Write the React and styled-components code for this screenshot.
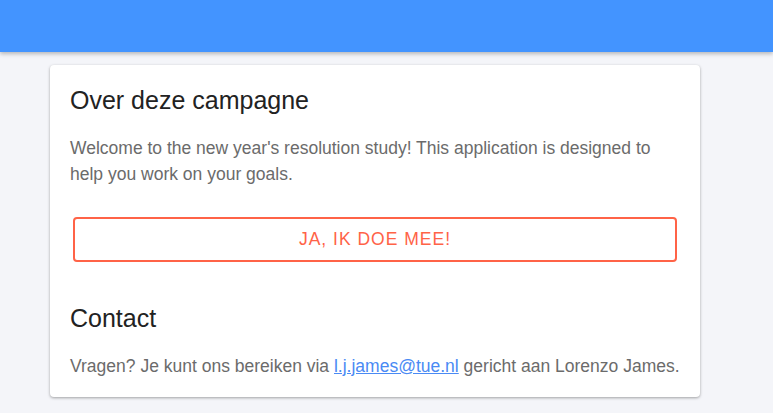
import React from "react";
import styled, { createGlobalStyle } from "styled-components";

const GlobalStyle = createGlobalStyle`
  html, body {
    margin: 0;
    padding: 0;
    background: #f4f5f9;
    font-family: "Liberation Sans", Arial, sans-serif;
  }
`;

const TopBar = styled.header`
  height: 52px;
  background: #4394ff;
  box-shadow: 0 2px 4px rgba(0, 0, 0, 0.25);
`;

const Main = styled.main`
  padding: 13px 73px 16px 50px;
`;

const Card = styled.section`
  background: #fff;
  border-radius: 4px;
  box-shadow: 0 1px 3px rgba(0, 0, 0, 0.35);
  padding: 21px 20px 18px;
`;

const Heading = styled.h2`
  margin: 0;
  margin-top: ${(p) => p.$top || 0}px;
  font-size: 25px;
  line-height: 29px;
  font-weight: 400;
  color: #222;
`;

const Text = styled.p`
  margin: 20px 0 0;
  font-size: 17.5px;
  line-height: 26px;
  color: #6b6b6b;
`;

const Mail = styled.a`
  color: #4a8af4;
  text-decoration: underline;
`;

const JoinButton = styled.button`
  display: block;
  width: calc(100% - 6px);
  height: 45px;
  margin: 30px 3px 0;
  background: #fff;
  border: 2px solid #ff6347;
  border-radius: 4px;
  color: #ff6347;
  font-family: inherit;
  font-size: 17.5px;
  letter-spacing: 1px;
  text-transform: uppercase;
  cursor: pointer;
`;

export default function App() {
  return (
    <>
      <GlobalStyle />
      <TopBar />
      <Main>
        <Card>
          <Heading>Over deze campagne</Heading>
          <Text>
            Welcome to the new year's resolution study! This application is
            designed to help you work on your goals.
          </Text>
          <JoinButton>Ja, ik doe mee!</JoinButton>
          <Heading $top={42}>Contact</Heading>
          <Text>
            Vragen? Je kunt ons bereiken via{" "}
            <Mail href="mailto:l.j.james@tue.nl">l.j.james@tue.nl</Mail> gericht
            aan Lorenzo James.
          </Text>
        </Card>
      </Main>
    </>
  );
}
